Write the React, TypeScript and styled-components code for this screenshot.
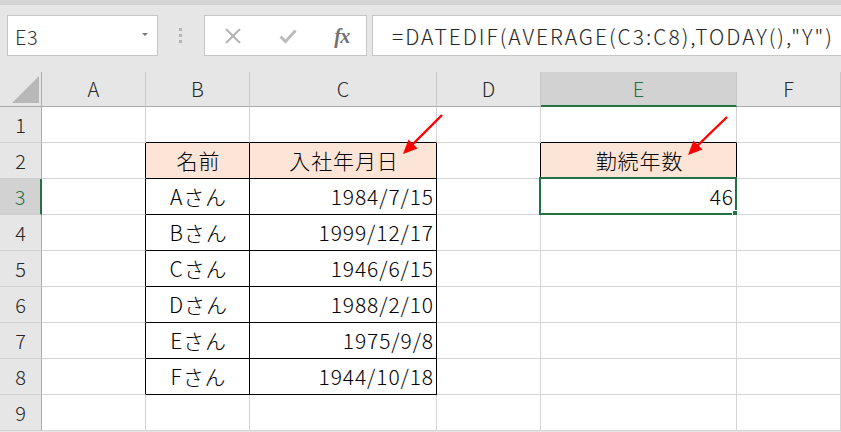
import React from 'react';
import styled, { createGlobalStyle } from 'styled-components';

const Global = createGlobalStyle`
  html, body { margin: 0; padding: 0; background: #fff; }
  body {
    width: 841px; height: 432px; overflow: hidden;
    font-family: "Noto Sans CJK JP", "Noto Sans", sans-serif;
  }
`;

const GREEN = '#217346';
const GRID = '#d4d4d4';

const Page = styled.div`
  position: relative;
  width: 841px;
  height: 432px;
  display: flex;
  flex-direction: column;
  background: #e6e6e6;
  overflow: hidden;
`;

const TopStrip = styled.div`
  flex: none;
  height: 5px;
  background: #d4d4d4;
`;

const Toolbar = styled.div`
  flex: none;
  height: 67px;
  box-sizing: border-box;
  padding: 10px 0 16px 7px;
  display: flex;
  align-items: stretch;
`;

const NameBox = styled.div`
  width: 151px;
  box-sizing: border-box;
  border: 1px solid #c6c6c6;
  background: #fff;
  display: flex;
  align-items: center;
  justify-content: space-between;
  padding: 0 9px 0 7px;
  font-size: 20px;
  font-weight: 300;
  color: #333;
`;

const NameText = styled.span`
  line-height: 1;
  padding-top: 2px;
  letter-spacing: 0.5px;
`;

const DropArrow = styled.span`
  width: 0;
  height: 0;
  border-left: 3.5px solid transparent;
  border-right: 3.5px solid transparent;
  border-top: 3.5px solid #777;
  margin-top: -2px;
`;

const Grip = styled.div`
  width: 3px;
  margin: 0 22px 0 21px;
  display: flex;
  flex-direction: column;
  justify-content: center;
  gap: 3px;
`;

const GripDot = styled.span`
  width: 3px;
  height: 3px;
  background: #b4b4b4;
`;

const ButtonBox = styled.div`
  width: 163px;
  box-sizing: border-box;
  border: 1px solid #c6c6c6;
  background: #fff;
  display: flex;
  align-items: center;
  padding: 0 13px 0 17px;
  justify-content: space-between;
`;

const IconSlot = styled.span`
  width: 22px;
  display: flex;
  align-items: center;
  justify-content: center;
`;

const Fx = styled.span`
  font-family: "Liberation Serif", "DejaVu Serif", serif;
  font-style: italic;
  font-weight: bold;
  font-size: 20px;
  color: #707070;
  letter-spacing: -0.5px;
  line-height: 1;
`;

const FormulaBox = styled.div`
  flex: 1;
  margin-left: 5px;
  box-sizing: border-box;
  border: 1px solid #c6c6c6;
  border-right: none;
  background: #fff;
  display: flex;
  align-items: center;
  padding-left: 19px;
  font-size: 21px;
  font-weight: 300;
  letter-spacing: 2px;
  color: #262626;
  white-space: nowrap;
  overflow: hidden;
`;

const Sheet = styled.div`
  flex: none;
  display: grid;
  grid-template-columns: 42px 104px 104px 187px 104px 196px 104px;
  grid-template-rows: 35px repeat(9, 36px);
  background: #fff;
`;

type Kind = 'corner' | 'colhead' | 'rowhead' | 'cell';

const Cell = styled.div<{
  $kind: Kind;
  $sel?: boolean;
  $fill?: boolean;
  $align?: 'left' | 'center' | 'right';
  $rb?: string;
  $bb?: string;
}>`
  position: relative;
  box-sizing: border-box;
  display: flex;
  align-items: center;
  justify-content: ${p => (p.$align === 'right' ? 'flex-end' : p.$align === 'left' ? 'flex-start' : 'center')};
  padding: 0 ${p => (p.$kind === 'cell' ? '2px' : '0')} 0 ${p => (p.$kind === 'cell' ? '4px' : '0')};
  font-size: ${p => (p.$kind === 'cell' ? '21px' : '20px')};
  font-weight: 300;
  letter-spacing: ${p => (p.$kind === 'cell' ? '0.9px' : '0')};
  line-height: 1;
  white-space: nowrap;
  color: ${p => (p.$sel ? GREEN : p.$kind === 'cell' ? '#000' : '#262626')};
  background: ${p =>
    p.$kind === 'cell' ? (p.$fill ? '#fce4d6' : '#fff') : p.$sel ? '#d2d2d2' : '#e6e6e6'};
  border-right: ${p =>
    p.$kind === 'rowhead' || p.$kind === 'corner'
      ? `${p.$sel ? 2 : 1}px solid ${p.$sel ? GREEN : '#ababab'}`
      : `1px solid ${p.$rb ?? (p.$kind === 'colhead' ? '#c8c8c8' : GRID)}`};
  border-bottom: ${p =>
    p.$kind === 'colhead' || p.$kind === 'corner'
      ? `${p.$sel ? 2 : 1}px solid ${p.$sel ? GREEN : '#ababab'}`
      : `1px solid ${p.$bb ?? (p.$kind === 'rowhead' ? '#d0d0d0' : GRID)}`};
`;

const CornerTri = styled.span`
  position: absolute;
  left: 12px;
  bottom: 3px;
  width: 0;
  height: 0;
  border-left: 27px solid transparent;
  border-bottom: 27px solid #b8b8b8;
`;

const Selection = styled.div`
  position: absolute;
  left: -2px;
  top: -2px;
  right: -1px;
  bottom: -1px;
  border: 2px solid ${GREEN};
  pointer-events: none;
`;

const Handle = styled.span`
  position: absolute;
  right: -5px;
  bottom: -5px;
  width: 6px;
  height: 6px;
  background: ${GREEN};
  border: 1px solid #fff;
`;

const Arrows = styled.svg`
  position: absolute;
  left: 0;
  top: 0;
  pointer-events: none;
`;

const cols = ['A', 'B', 'C', 'D', 'E', 'F'];

type Data = { text?: string; align?: 'left' | 'center' | 'right'; fill?: boolean };

const data: Record<string, Data> = {
  B2: { text: '名前', fill: true },
  C2: { text: '入社年月日', fill: true },
  E2: { text: '勤続年数', fill: true },
  E3: { text: '46', align: 'right' },
};
const rows: [string, string][] = [
  ['Aさん', '1984/7/15'],
  ['Bさん', '1999/12/17'],
  ['Cさん', '1946/6/15'],
  ['Dさん', '1988/2/10'],
  ['Eさん', '1975/9/8'],
  ['Fさん', '1944/10/18'],
];
rows.forEach(([n, d], i) => {
  data[`B${i + 3}`] = { text: n };
  data[`C${i + 3}`] = { text: d, align: 'right' };
});

const inTable = (c: string, r: number) =>
  ((c === 'B' || c === 'C') && r >= 2 && r <= 8) || (c === 'E' && r === 2);

const XIcon = () => (
  <svg width="18" height="18" viewBox="0 0 18 18">
    <path d="M2 2 L16 16 M16 2 L2 16" stroke="#b4b4b4" strokeWidth="2" fill="none" />
  </svg>
);

const CheckIcon = () => (
  <svg width="18" height="16" viewBox="0 0 18 16">
    <path d="M1.5 8.5 L6.5 13.5 L16.5 2.5" stroke="#bcbcbc" strokeWidth="3" fill="none" />
  </svg>
);

export default function App() {
  const cells: React.ReactNode[] = [];
  cells.push(
    <Cell key="corner" $kind="corner">
      <CornerTri />
    </Cell>
  );
  cols.forEach(c =>
    cells.push(
      <Cell key={`h${c}`} $kind="colhead" $sel={c === 'E'}>
        {c}
      </Cell>
    )
  );
  for (let r = 1; r <= 9; r++) {
    cells.push(
      <Cell key={`r${r}`} $kind="rowhead" $sel={r === 3}>
        {r}
      </Cell>
    );
    cols.forEach((c, ci) => {
      const id = `${c}${r}`;
      const d = data[id] ?? {};
      const next = cols[ci + 1];
      const rb = inTable(c, r) || (next && inTable(next, r)) ? '#000' : undefined;
      const bb = inTable(c, r) || inTable(c, r + 1) ? '#000' : undefined;
      const sel = id === 'E3';
      cells.push(
        <Cell key={id} $kind="cell" $fill={d.fill} $align={d.align} $rb={rb} $bb={bb}>
          {d.text}
          {sel && (
            <Selection>
              <Handle />
            </Selection>
          )}
        </Cell>
      );
    });
  }

  return (
    <>
      <Global />
      <Page>
        <TopStrip />
        <Toolbar>
          <NameBox>
            <NameText>E3</NameText>
            <DropArrow />
          </NameBox>
          <Grip>
            <GripDot />
            <GripDot />
            <GripDot />
          </Grip>
          <ButtonBox>
            <IconSlot>
              <XIcon />
            </IconSlot>
            <IconSlot>
              <CheckIcon />
            </IconSlot>
            <IconSlot>
              <Fx>fx</Fx>
            </IconSlot>
          </ButtonBox>
          <FormulaBox>=DATEDIF(AVERAGE(C3:C8),TODAY(),"Y")</FormulaBox>
        </Toolbar>
        <Sheet>{cells}</Sheet>
        <Arrows width="841" height="432" viewBox="0 0 841 432">
          <line x1="442" y1="115" x2="410" y2="147" stroke="#ff0000" strokeWidth="2.4" />
          <polygon points="403,154 417.5,148.5 408.5,139.5" fill="#ff0000" />
          <line x1="727" y1="117" x2="695" y2="148" stroke="#ff0000" strokeWidth="2.4" />
          <polygon points="688,155 702.5,149.5 693.5,140.5" fill="#ff0000" />
        </Arrows>
      </Page>
    </>
  );
}
